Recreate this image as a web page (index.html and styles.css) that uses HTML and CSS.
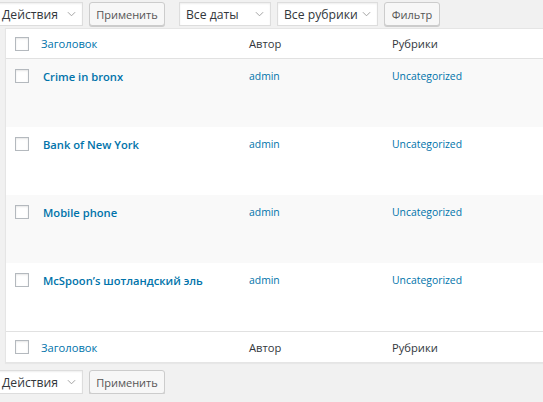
FILE: index.html
```html
<!DOCTYPE html>
<html lang="ru">
<head>
<meta charset="utf-8">
<link rel="stylesheet" href="styles.css">
</head>
<body>
<div class="page">
  <div class="tablenav top">
    <div class="select sel-actions"><span>Действия</span><svg class="chev" viewBox="0 0 10 6"><path d="M1 1l4 4 4-4" fill="none" stroke="#999" stroke-width="1"/></svg></div>
    <div class="btn btn-apply">Применить</div>
    <div class="select sel-dates"><span>Все даты</span><svg class="chev" viewBox="0 0 10 6"><path d="M1 1l4 4 4-4" fill="none" stroke="#999" stroke-width="1"/></svg></div>
    <div class="select sel-cats"><span>Все рубрики</span><svg class="chev" viewBox="0 0 10 6"><path d="M1 1l4 4 4-4" fill="none" stroke="#999" stroke-width="1"/></svg></div>
    <div class="btn btn-filter">Фильтр</div>
  </div>

  <div class="table">
    <div class="row head">
      <div class="cell cb"><span class="checkbox"></span></div>
      <div class="cell title"><a class="sort">Заголовок</a></div>
      <div class="cell author">Автор</div>
      <div class="cell cats">Рубрики</div>
    </div>
    <div class="row item alt">
      <div class="cell cb"><span class="checkbox"></span></div>
      <div class="cell title"><a class="post">Crime in bronx</a></div>
      <div class="cell author"><a>admin</a></div>
      <div class="cell cats"><a>Uncategorized</a></div>
    </div>
    <div class="row item">
      <div class="cell cb"><span class="checkbox"></span></div>
      <div class="cell title"><a class="post">Bank of New York</a></div>
      <div class="cell author"><a>admin</a></div>
      <div class="cell cats"><a>Uncategorized</a></div>
    </div>
    <div class="row item alt">
      <div class="cell cb"><span class="checkbox"></span></div>
      <div class="cell title"><a class="post">Mobile phone</a></div>
      <div class="cell author"><a>admin</a></div>
      <div class="cell cats"><a>Uncategorized</a></div>
    </div>
    <div class="row item">
      <div class="cell cb"><span class="checkbox"></span></div>
      <div class="cell title"><a class="post">McSpoon’s шотландский эль</a></div>
      <div class="cell author"><a>admin</a></div>
      <div class="cell cats"><a>Uncategorized</a></div>
    </div>
    <div class="row foot">
      <div class="cell cb"><span class="checkbox"></span></div>
      <div class="cell title"><a class="sort">Заголовок</a></div>
      <div class="cell author">Автор</div>
      <div class="cell cats">Рубрики</div>
    </div>
  </div>

  <div class="tablenav bottom">
    <div class="select sel-actions"><span>Действия</span><svg class="chev" viewBox="0 0 10 6"><path d="M1 1l4 4 4-4" fill="none" stroke="#999" stroke-width="1"/></svg></div>
    <div class="btn btn-apply">Применить</div>
  </div>
</div>
</body>
</html>
```

FILE: styles.css
```css
html, body {
  margin: 0;
  padding: 0;
  background: #f1f1f1;
  overflow: hidden;
}
body {
  font-family: "Segoe UI", "Open Sans", "Noto Sans", sans-serif;
  font-size: 10.4px;
  color: #32373c;
}
.page {
  padding-left: 5px;
  width: 560px;
}
.tablenav {
  display: flex;
  align-items: center;
  height: 24px;
  margin-left: -10px;
}
.tablenav.top {
  margin-top: 2px;
  margin-bottom: 2px;
}
.tablenav.bottom {
  margin-top: 7px;
}
.select {
  box-sizing: border-box;
  height: 24px;
  background: #fff;
  border: 1px solid #ddd;
  box-shadow: inset 0 1px 2px rgba(0,0,0,.07);
  display: flex;
  align-items: center;
  justify-content: space-between;
  padding: 0 6px 0 6px;
  font-size: 12.2px;
  color: #32373c;
}
.chev {
  width: 9px;
  height: 6px;
}
.sel-actions { width: 88px; }
.sel-dates { width: 92px; margin-left: 14px; }
.sel-cats { width: 101px; margin-left: 6px; }
.btn {
  box-sizing: border-box;
  height: 24px;
  display: flex;
  align-items: center;
  justify-content: center;
  background: #f7f7f7;
  border: 1px solid #ccc;
  border-radius: 3px;
  box-shadow: 0 1px 0 #ccc;
  color: #555;
  font-size: 11px;
  margin-left: 6px;
}
.btn-apply { width: 76px; }
.btn-filter { width: 56px; }

.table {
  background: #fff;
  border: 1px solid #e5e5e5;
  box-shadow: 0 1px 1px rgba(0,0,0,.04);
}
.row {
  display: grid;
  grid-template-columns: 25px 208px 143px 1fr;
}
.row.head {
  height: 29px;
  border-bottom: 1px solid #e1e1e1;
  align-items: center;
}
.row.foot {
  height: 30px;
  border-top: 1px solid #e1e1e1;
  align-items: center;
}
.row.item {
  height: 68px;
  align-items: start;
}
.row.item.alt { background: #f9f9f9; }
.cell { padding-left: 10px; }
.cell.cb { padding-left: 9px; display: flex; }
.row.item .cell { padding-top: 10px; }
.row.item .cell.cb { padding-top: 10px; }
.checkbox {
  box-sizing: border-box;
  display: block;
  width: 14px;
  height: 14px;
  border: 1px solid #b4b9be;
  background: #fff;
  box-shadow: inset 0 1px 2px rgba(0,0,0,.1);
}
a { color: #0073aa; text-decoration: none; }
.head .cell, .foot .cell { font-size: 11.2px; }
a.post {
  font-weight: 600;
  font-size: 11.2px;
  padding-left: 2px;
}
```
